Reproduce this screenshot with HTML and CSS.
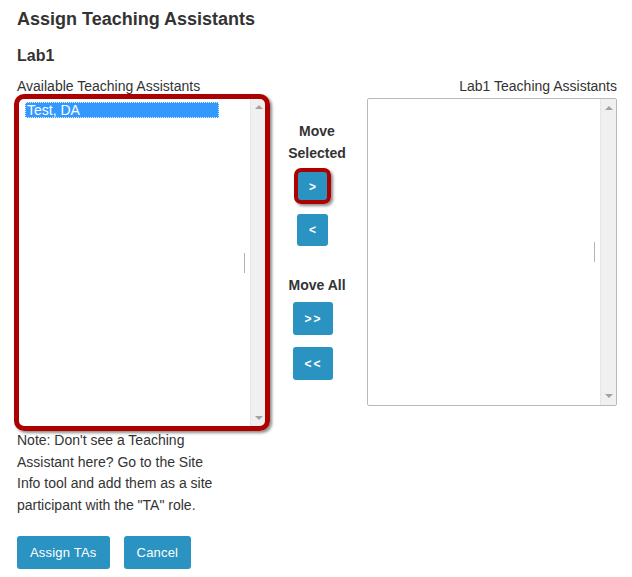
FILE: index.html
```html
<!DOCTYPE html>
<html lang="en">
<head>
<meta charset="utf-8">
<title>Assign Teaching Assistants</title>
<link rel="stylesheet" href="styles.css">
</head>
<body>
<div class="page">
  <h1 class="title">Assign Teaching Assistants</h1>
  <h2 class="subtitle">Lab1</h2>
  <div class="picker">
    <div class="col col-left">
      <div class="label">Available Teaching Assistants</div>
      <div class="listbox listbox-avail annotated">
        <div class="list-items">
          <div class="option selected">Test, DA</div>
        </div>
        <div class="scrollbar"><span class="arrow up"></span><span class="arrow down"></span></div>
        <span class="grip"></span>
      </div>
      <p class="note">Note: Don't see a Teaching Assistant here? Go to the Site Info tool and add them as a site participant with the "TA" role.</p>
    </div>
    <div class="col col-mid">
      <div class="mid-label">Move<br>Selected</div>
      <button class="move move-first annotated-btn">&gt;</button>
      <button class="move move-gap">&lt;</button>
      <div class="mid-label mid-label-all">Move All</div>
      <button class="move move-wide">&gt;&gt;</button>
      <button class="move move-wide move-gap">&lt;&lt;</button>
    </div>
    <div class="col col-right">
      <div class="label label-right">Lab1 Teaching Assistants</div>
      <div class="listbox listbox-assigned">
        <div class="list-items"></div>
        <div class="scrollbar"><span class="arrow up"></span><span class="arrow down"></span></div>
        <span class="grip"></span>
      </div>
    </div>
  </div>
  <div class="actions">
    <button class="action">Assign TAs</button>
    <button class="action">Cancel</button>
  </div>
</div>
</body>
</html>
```

FILE: styles.css
```css
html, body {
  margin: 0;
  padding: 0;
  background: #ffffff;
}

body {
  font-family: "Liberation Sans", Arial, sans-serif;
  color: #333333;
}

.page {
  padding: 9px 15px 0 17px;
}

.title {
  margin: 0;
  font-size: 18px;
  line-height: 21px;
  font-weight: bold;
  color: #333333;
}

.subtitle {
  margin: 16px 0 0 0;
  font-size: 16px;
  line-height: 20px;
  font-weight: bold;
  color: #333333;
}

.picker {
  display: flex;
  align-items: flex-start;
  margin-top: 11px;
}

.col-left {
  width: 250px;
  flex: none;
}

.col-mid {
  width: 100px;
  flex: none;
  display: flex;
  flex-direction: column;
  align-items: center;
  padding-top: 43px;
}

.col-right {
  width: 250px;
  flex: none;
}

.label {
  font-size: 14px;
  line-height: 18px;
  color: #333333;
}

.label-right {
  text-align: right;
}

.listbox {
  position: relative;
  box-sizing: border-box;
  display: flex;
  border: 1px solid #b9b9b9;
  border-radius: 2px;
  background: #ffffff;
}

.listbox-avail {
  height: 331px;
  margin-top: 2px;
}

.listbox-assigned {
  height: 308px;
  margin-top: 3px;
}

.list-items {
  flex: 1;
  padding: 4px 0 0 7px;
}

.option {
  box-sizing: border-box;
  width: 194px;
  height: 16px;
  padding: 0 0 0 1px;
  font-size: 14px;
  line-height: 14px;
  color: #ffffff;
}

.option.selected {
  background: #3399ff;
  border: 1px dotted #e8f2ff;
}

.scrollbar {
  width: 16px;
  flex: none;
  box-sizing: border-box;
  background: #f0f0f0;
  border-left: 1px solid #e6e6e6;
  display: flex;
  flex-direction: column;
  justify-content: space-between;
  align-items: center;
  padding: 7px 0;
}

.arrow {
  width: 0;
  height: 0;
  border-left: 4px solid transparent;
  border-right: 4px solid transparent;
}

.arrow.up {
  border-bottom: 4px solid #a3a3a3;
}

.arrow.down {
  border-top: 4px solid #a3a3a3;
}

.grip {
  position: absolute;
  right: 21px;
  top: 50%;
  width: 1px;
  height: 20px;
  margin-top: -10px;
  background: #b4b4b4;
}

.annotated::after {
  content: "";
  position: absolute;
  left: -4px;
  top: -4px;
  right: -4px;
  bottom: -4px;
  border: 5px solid #ad0000;
  border-radius: 10px;
  box-shadow: 2px 2px 3px rgba(0, 0, 0, 0.45);
  pointer-events: none;
}

.note {
  margin: 2px 0 0 0;
  width: 206px;
  font-size: 14px;
  line-height: 21.6px;
  color: #333333;
}

.mid-label {
  font-size: 14px;
  line-height: 22px;
  font-weight: bold;
  text-align: center;
  color: #333333;
}

.mid-label-all {
  margin-top: 28px;
}

.move {
  position: relative;
  box-sizing: border-box;
  width: 31px;
  height: 32px;
  margin: 12px 9px 0 0;
  padding: 0;
  border: none;
  border-radius: 3px;
  background: #2a93c1;
  color: #ffffff;
  font-family: "Liberation Sans", Arial, sans-serif;
  font-size: 12px;
  font-weight: bold;
}

.move-first {
  margin-top: 7px;
  height: 31px;
}

.move-wide {
  width: 40px;
  height: 33px;
  margin-top: 6px;
  letter-spacing: 2px;
  padding-left: 2px;
}

.move-wide.move-gap {
  margin-top: 12px;
}

.annotated-btn::after {
  content: "";
  position: absolute;
  left: -3px;
  top: -3px;
  right: -3px;
  bottom: -2px;
  border: 4px solid #ad0000;
  border-radius: 7px;
  box-shadow: 2px 2px 3px rgba(0, 0, 0, 0.45);
}

.actions {
  display: flex;
  gap: 14px;
  margin-top: 20px;
}

.action {
  height: 33px;
  padding: 0 13px;
  border: none;
  border-radius: 3px;
  background: #2a93c1;
  color: #ffffff;
  font-family: "Liberation Sans", Arial, sans-serif;
  font-size: 13px;
  letter-spacing: 0.2px;
}
```
